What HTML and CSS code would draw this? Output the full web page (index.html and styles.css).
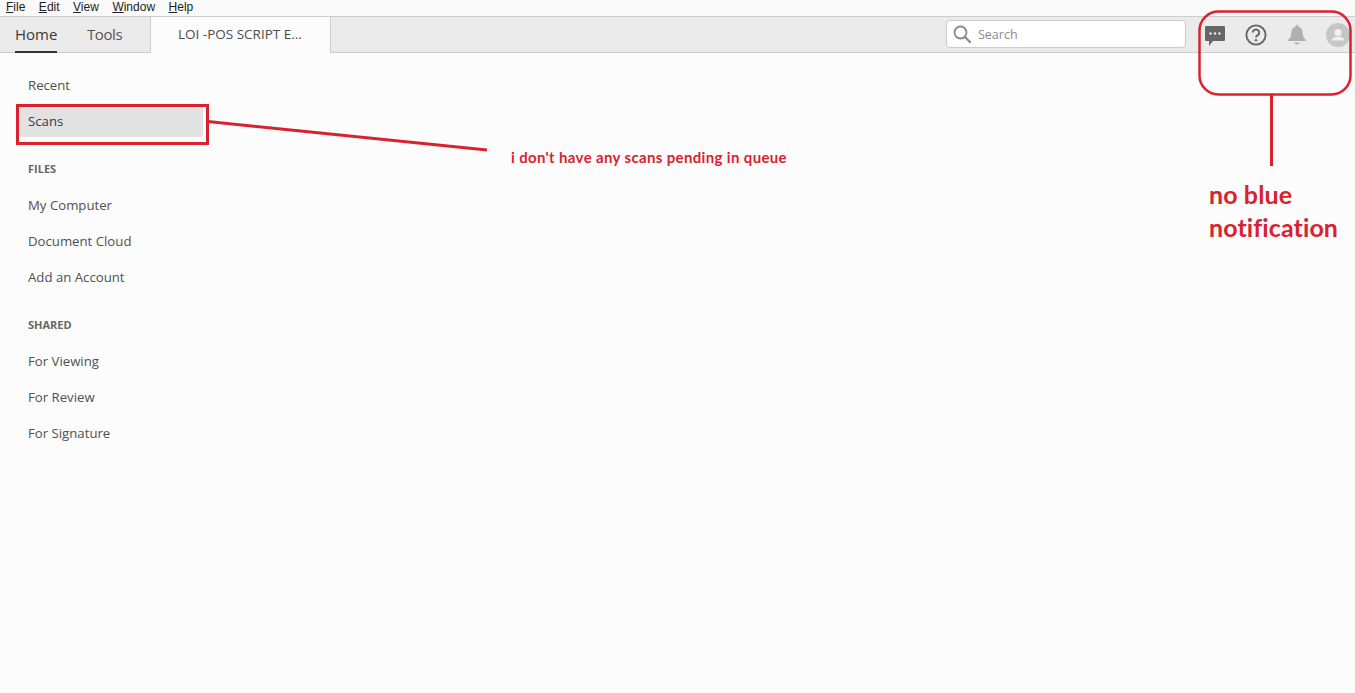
FILE: index.html
```html
<!DOCTYPE html>
<html lang="en">
<head>
<meta charset="utf-8">
<title>Home</title>
<link rel="stylesheet" href="styles.css">
</head>
<body>
<nav class="menubar">
  <span class="menu"><u>F</u>ile</span>
  <span class="menu"><u>E</u>dit</span>
  <span class="menu"><u>V</u>iew</span>
  <span class="menu"><u>W</u>indow</span>
  <span class="menu"><u>H</u>elp</span>
</nav>
<header class="tabbar">
  <div class="tab tab-home">Home</div>
  <div class="tab tab-tools">Tools</div>
  <div class="tab-doc">LOI -POS SCRIPT E...</div>
  <div class="tools">
    <div class="search">
      <svg class="search-icon" width="18" height="18" viewBox="0 0 18 18"><circle cx="7.5" cy="7.5" r="6" fill="none" stroke="#8a8a8a" stroke-width="1.8"/><path d="M12 12l5 5" stroke="#8a8a8a" stroke-width="2.2" stroke-linecap="round"/></svg>
      <span>Search</span>
    </div>
    <svg class="icon icon-chat" width="22" height="24" viewBox="0 0 22 24"><path d="M2 2h18a1 1 0 0 1 1 1v13a1 1 0 0 1-1 1H9l-4 5v-5H2a1 1 0 0 1-1-1V3a1 1 0 0 1 1-1z" fill="#666"/><circle cx="6.5" cy="9.5" r="1.2" fill="#eee"/><circle cx="11" cy="9.5" r="1.2" fill="#eee"/><circle cx="15.5" cy="9.5" r="1.2" fill="#eee"/></svg>
    <svg class="icon icon-help" width="22" height="22" viewBox="0 0 22 22"><circle cx="11" cy="11" r="9.6" fill="none" stroke="#666" stroke-width="1.9"/><path d="M7.8 8.6a3.2 3 0 1 1 4.9 2.5c-1.1.7-1.7 1.2-1.7 2.5" fill="none" stroke="#666" stroke-width="2"/><circle cx="11" cy="16.2" r="1.2" fill="#666"/></svg>
    <svg class="icon icon-bell" width="20" height="22" viewBox="0 0 20 22"><path d="M10 1a1.6 1.6 0 0 1 1.6 1.7C15 3.6 15.7 6.6 15.8 10c.1 3 1.2 4.500 3.2 6v1H1v-1c2-1.500 3.100-3 3.200-6 .1-3.400.8-6.400 4.200-7.300A1.600 1.600 0 0 1 10 1z" fill="#b0b0b0"/><path d="M7.500 18.500h5a2.500 2 0 0 1-5 0z" fill="#b0b0b0"/></svg>
    <svg class="icon icon-user" width="24" height="24" viewBox="0 0 24 24"><circle cx="12" cy="12" r="12" fill="#c6c6c6"/><circle cx="12" cy="9.500" r="3.600" fill="#f1f1f1"/><path d="M5.500 17.500c0-2.500 3.500-3.200 4.700-3.800h3.600c1.200.6 4.700 1.300 4.700 3.800z" fill="#f1f1f1"/></svg>
  </div>
</header>
<main class="sidebar">
  <div class="item">Recent</div>
  <div class="item item-active">Scans</div>
  <div class="heading heading-first">FILES</div>
  <div class="item">My Computer</div>
  <div class="item">Document Cloud</div>
  <div class="item">Add an Account</div>
  <div class="heading">SHARED</div>
  <div class="item">For Viewing</div>
  <div class="item">For Review</div>
  <div class="item">For Signature</div>
</main>
<svg class="marks" width="1355" height="693" viewBox="0 0 1355 693">
  <rect x="17.500" y="105.500" width="190" height="38" fill="none" stroke="#d8232f" stroke-width="3"/>
  <path d="M208 121.500L487 150" stroke="#d8232f" stroke-width="3" fill="none"/>
  <rect x="1199.500" y="11.500" width="151" height="83" rx="19" fill="none" stroke="#d8232f" stroke-width="2.500"/>
  <path d="M1271.500 95v71" stroke="#d8232f" stroke-width="3" fill="none"/>
</svg>
<p class="note note-scans">i don't have any scans pending in queue</p>
<p class="note note-blue">no blue<br>notification</p>
</body>
</html>
```

FILE: styles.css
```css
* { box-sizing: border-box; }
html, body { margin: 0; height: 100%; }
body {
  position: relative;
  width: 1355px;
  height: 693px;
  overflow: hidden;
  background: #fcfcfc;
  font-family: "Open Sans", "Noto Sans", sans-serif;
  color: #4b4b4b;
}
.menubar {
  display: flex;
  gap: 13.500px;
  height: 16px;
  padding-left: 6px;
  background: #fafafa;
  font-family: "Liberation Sans", Arial, sans-serif;
  font-size: 12px;
  line-height: 14px;
  color: #222;
}
.menu { display: block; }
.tabbar {
  display: flex;
  align-items: stretch;
  height: 37px;
  background: #ebebeb;
  border-top: 1px solid #cdcdcd;
  border-bottom: 1px solid #cdcdcd;
}
.tab {
  margin-left: 15px;
  font-size: 15px;
  line-height: 35px;
  color: #555;
}
.tab-home {
  color: #3a3a3a;
  border-bottom: 2px solid #333;
  height: 36px;
  width: 42px;
}
.tab-tools { margin-left: 30px; width: 36px; letter-spacing: -0.4px; }
.tab-doc {
  margin-left: 27px;
  width: 181px;
  background: #fcfcfc;
  border-left: 1px solid #cdcdcd;
  border-right: 1px solid #cdcdcd;
  margin-bottom: -1px;
  padding-left: 27px;
  font-size: 13.500px;
  line-height: 35px;
  color: #4b4b4b;
}
.tools {
  display: flex;
  align-items: center;
  margin-left: auto;
  padding-right: 5px;
}
.search {
  display: flex;
  align-items: center;
  gap: 7px;
  width: 240px;
  height: 28px;
  margin-top: -1px;
  padding-left: 6px;
  background: #fff;
  border: 1px solid #cbcbcb;
  border-radius: 4px;
  font-size: 12.500px;
  color: #8c8c8c;
}
.icon { flex: none; display: block; }
.icon-chat { margin-left: 18px; margin-top: 2px; }
.icon-help { margin-left: 19px; }
.icon-bell { margin-left: 20px; margin-top: 1px; }
.icon-user { margin-left: 19px; margin-top: 1px; }
.sidebar {
  display: flex;
  flex-direction: column;
  width: 203px;
  padding: 15px 0 0 18px;
}
.item {
  flex: none;
  height: 36px;
  padding-left: 10px;
  font-size: 13.200px;
  line-height: 35px;
  color: #505050;
}
.item-active {
  height: 30px;
  margin: 3px 0;
  line-height: 28px;
  color: #3c3c3c;
  background: #e2e2e2;
  border-radius: 0 0 4px 4px;
}
.heading {
  flex: none;
  height: 37px;
  margin-top: 11px;
  padding-left: 10px;
  font-size: 11px;
  font-weight: 700;
  line-height: 36px;
  color: #666;
}
.marks { position: absolute; left: 0; top: 0; pointer-events: none; }
.note {
  position: absolute;
  margin: 0;
  font-family: Lato, "Open Sans", sans-serif;
  font-weight: 700;
  font-variant-ligatures: none;
  color: #d8232f;
}
.note-scans { left: 511px; top: 148px; font-size: 15px; line-height: 18px; letter-spacing: 0.35px; }
.note-blue { left: 1209px; top: 178px; font-size: 25px; line-height: 32.500px; letter-spacing: 0.1px; }
```
